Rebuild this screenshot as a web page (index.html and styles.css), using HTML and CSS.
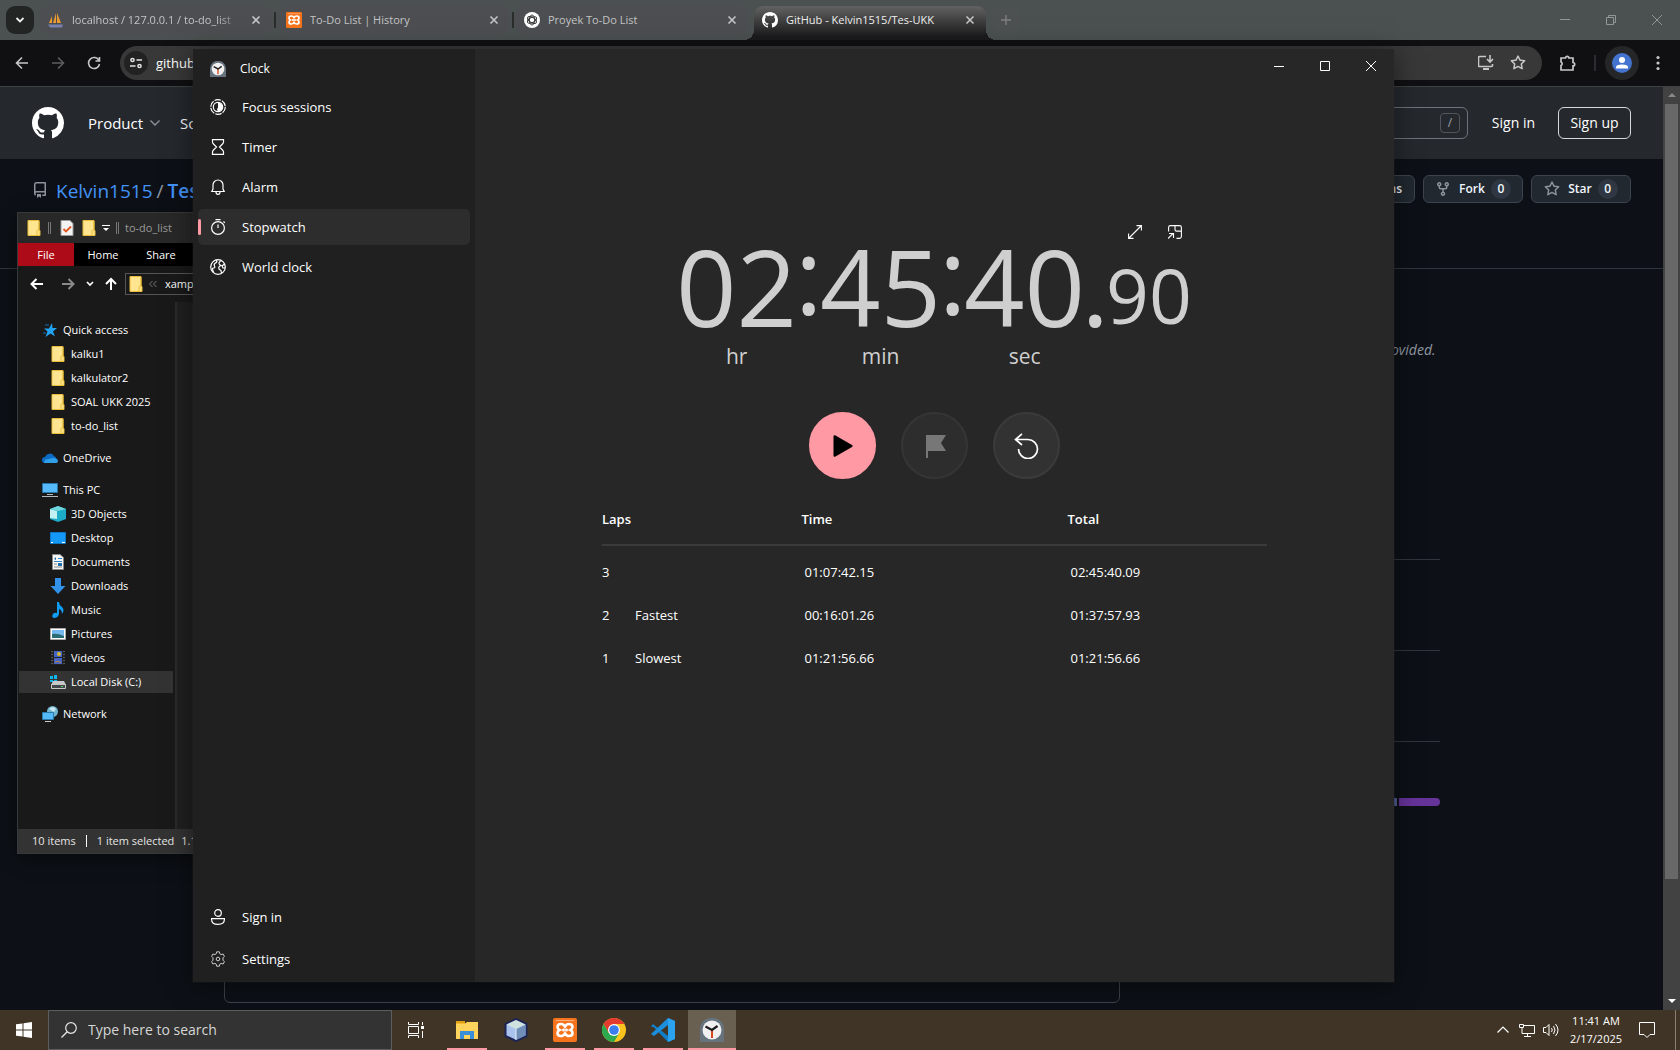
FILE: index.html
```html
<!DOCTYPE html>
<html lang="en">
<head>
<meta charset="utf-8">
<title>Desktop</title>
<link rel="stylesheet" href="styles.css">
</head>
<body>
<svg class="sprite" aria-hidden="true">
  <symbol id="github" viewBox="0 0 16 16"><path fill="#fff" d="M8 0C3.58 0 0 3.58 0 8c0 3.54 2.29 6.53 5.47 7.59.4.07.55-.17.55-.38 0-.19-.01-.82-.01-1.49-2.01.37-2.53-.49-2.69-.94-.09-.23-.48-.94-.82-1.13-.28-.15-.68-.52-.01-.53.63-.01 1.08.58 1.23.82.72 1.21 1.87.87 2.33.66.07-.52.28-.87.51-1.07-1.78-.2-3.64-.89-3.64-3.95 0-.87.31-1.59.82-2.15-.08-.2-.36-1.02.08-2.12 0 0 .67-.21 2.2.82.64-.18 1.32-.27 2-.27.68 0 1.36.09 2 .27 1.53-1.04 2.2-.82 2.2-.82.44 1.1.16 1.92.08 2.12.51.56.82 1.27.82 2.15 0 3.07-1.87 3.75-3.65 3.95.29.25.54.73.54 1.48 0 1.07-.01 1.93-.01 2.2 0 .21.15.46.55.38A8.013 8.013 0 0016 8c0-4.42-3.58-8-8-8z"/></symbol>
  <symbol id="close" viewBox="0 0 10 10"><path d="M1.500 1.500l7 7M8.500 1.500l-7 7" stroke="currentColor" stroke-width="1.600"/></symbol>
  <symbol id="folder" viewBox="0 0 16 16"><path d="M2 .5h11v9.500l1 .5v5H2z" fill="#ffe58f" stroke="#e8bd3a"/><path d="M11 15.500v-4.500q0-1 1-1h1v-9" fill="none" stroke="#e8bd3a"/></symbol>
  <symbol id="star" viewBox="0 0 16 16"><path fill="currentColor" d="M8 .25a.75.75 0 0 1 .673.418l1.882 3.815 4.210.612a.75.75 0 0 1 .416 1.279l-3.046 2.970.719 4.192a.751.751 0 0 1-1.088.791L8 12.347l-3.766 1.980a.75.75 0 0 1-1.088-.790l.720-4.194L.818 6.374a.75.75 0 0 1 .416-1.280l4.210-.611L7.327.668A.75.75 0 0 1 8 .25Zm0 2.445L6.615 5.500a.75.75 0 0 1-.564.410l-3.097.450 2.240 2.184a.75.75 0 0 1 .216.664l-.528 3.084 2.769-1.456a.75.75 0 0 1 .698 0l2.770 1.456-.530-3.084a.75.75 0 0 1 .216-.664l2.240-2.183-3.096-.450a.75.75 0 0 1-.564-.410L8 2.694Z"/></symbol>
  <symbol id="xampp" viewBox="0 0 24 24"><rect width="24" height="24" rx="2" fill="#f5731d"/><path d="M3 2.500h18" stroke="#fbb07c" stroke-width="1"/><path d="M12 8.500Q10.500 6 8 6 4.500 6 4.500 9q0 2 2 3-2 1-2 3 0 3 3.500 3 2.500 0 4-2.500 1.500 2.500 4 2.500 3.500 0 3.500-3 0-2-2-3 2-1 2-3 0-3-3.500-3-2.500 0-4 2.500z" fill="none" stroke="#fff" stroke-width="2.600"/><path d="M9 12h6M10.500 10.500v3M13.500 10.500v3" stroke="#fff" stroke-width="1.600"/></symbol>
  <symbol id="clockface" viewBox="0 0 24 24"><path d="M0 24V11A11 11 0 0 1 12 0a11 11 0 0 1 12 11v13z" fill="#66737f"/><circle cx="12" cy="12" r="9.500" fill="#f0f0f0"/><path d="M12 12v8" stroke="#d8471e" stroke-width="2"/><path d="M5.500 8.500L12 12l5.500-4" fill="none" stroke="#1c1c1c" stroke-width="2.200"/></symbol>
</svg>

<main class="desktop">
  <section class="browser" aria-label="Browser">
    <div class="tabstrip">
      <button class="tab-search" aria-label="Search tabs"><svg width="10" height="10" viewBox="0 0 10 10"><path d="M1.500 3l3.500 3.500L8.500 3" fill="none" stroke="#eee" stroke-width="1.800"/></svg></button>
      <div class="tab"><svg width="16" height="16" viewBox="0 0 16 16"><path d="M1 11l3-7v7zM5 11L8 1v10zM9 11V1l4 10z" fill="#ee9a33"/><path d="M0 12.500h15l-1 3H2z" fill="#7880b0"/></svg><span class="tab-title faded">localhost / 127.0.0.1 / to-do_list</span><button class="tab-close" aria-label="Close tab"><svg width="10" height="10"><use href="#close"/></svg></button></div>
      <div class="tab"><svg width="16" height="16"><use href="#xampp"/></svg><span class="tab-title">To-Do List | History</span><button class="tab-close" aria-label="Close tab"><svg width="10" height="10"><use href="#close"/></svg></button></div>
      <div class="tab"><svg width="16" height="16" viewBox="0 0 16 16"><circle cx="8" cy="8" r="8" fill="#fff"/><g fill="none" stroke="#333" stroke-width=".9"><ellipse cx="8" cy="8" rx="2.600" ry="5"/><ellipse cx="8" cy="8" rx="2.600" ry="5" transform="rotate(60 8 8)"/><ellipse cx="8" cy="8" rx="2.600" ry="5" transform="rotate(120 8 8)"/></g></svg><span class="tab-title">Proyek To-Do List</span><button class="tab-close" aria-label="Close tab"><svg width="10" height="10"><use href="#close"/></svg></button></div>
      <div class="tab active"><svg width="16" height="16"><use href="#github"/></svg><span class="tab-title">GitHub - Kelvin1515/Tes-UKK</span><button class="tab-close" aria-label="Close tab"><svg width="10" height="10"><use href="#close"/></svg></button></div>
      <button class="new-tab" aria-label="New tab"><svg width="10" height="10" viewBox="0 0 10 10"><path d="M5 0v10M0 5h10" stroke="#7d7f80" stroke-width="1.400"/></svg></button>
      <div class="window-buttons dim">
        <button aria-label="Minimize"><svg width="10" height="10" viewBox="0 0 10 10"><path d="M0 4.500h10" stroke="currentColor"/></svg></button>
        <button aria-label="Restore"><svg width="10" height="10" viewBox="0 0 10 10"><path d="M.5 2.500h7v7h-7zM2.500 2.500v-2h7v7h-2" fill="none" stroke="currentColor"/></svg></button>
        <button aria-label="Close"><svg width="10" height="10" viewBox="0 0 10 10"><path d="M0 0l10 10M10 0L0 10" stroke="currentColor"/></svg></button>
      </div>
    </div>

    <div class="toolbar">
      <button class="tool" aria-label="Back"><svg width="14" height="14" viewBox="0 0 14 14"><path d="M13 7H2M7 1.500L1.500 7 7 12.500" fill="none" stroke="#c7c7c7" stroke-width="1.600"/></svg></button>
      <button class="tool" aria-label="Forward"><svg width="14" height="14" viewBox="0 0 14 14"><path d="M1 7h11M7 1.500L12.500 7 7 12.500" fill="none" stroke="#5e5e5e" stroke-width="1.600"/></svg></button>
      <button class="tool" aria-label="Reload"><svg width="14" height="14" viewBox="0 0 14 14"><path d="M12 4.500A5.500 5.500 0 1 0 12.500 8M12.500 1v4h-4" fill="none" stroke="#c7c7c7" stroke-width="1.600"/></svg></button>
      <div class="omnibox">
        <button class="site-info" aria-label="Site information"><svg width="12" height="12" viewBox="0 0 12 12"><g fill="none" stroke="#e3e3e3" stroke-width="1.500"><circle cx="2.500" cy="3" r="1.600"/><path d="M6.500 3H12M0 9h5.500"/><circle cx="9.500" cy="9" r="1.600"/></g></svg></button>
        <input class="url" aria-label="Address" value="github.com/Kelvin1515/Tes-UKK">
        <svg width="16" height="16" viewBox="0 0 16 16"><path d="M8 1.500H1.500q-1 0-1 1v8q0 1 1 1h12q1 0 1-1V9M12 0v6.500M9 4l3 3 3-3" fill="none" stroke="#c7c7c7" stroke-width="1.600"/><path d="M5 13h6v2H5z" fill="#c7c7c7"/></svg>
        <svg class="soft" width="16" height="16"><use href="#star"/></svg>
      </div>
      <svg width="18" height="18" viewBox="0 0 18 18"><path d="M2 4h4.500a1.700 1.700 0 1 1 3.400 0H14v4.500a1.700 1.700 0 1 1 0 3.400V16H2v-4.500a1.900 1.900 0 0 0 0-3.500z" fill="none" stroke="#c7c7c7" stroke-width="1.700"/></svg>
      <span class="toolbar-rule"></span>
      <button class="avatar" aria-label="Profile"><svg width="20" height="20" viewBox="0 0 20 20"><circle cx="10" cy="10" r="10" fill="#4373cf"/><circle cx="10" cy="7" r="3" fill="#fff"/><path d="M4 15.500v-1.500q0-2.500 6-2.500t6 2.500v1.500z" fill="#fff"/></svg></button>
      <svg width="4" height="16" viewBox="0 0 4 16"><g fill="#c7c7c7"><circle cx="2" cy="2.500" r="1.600"/><circle cx="2" cy="8" r="1.600"/><circle cx="2" cy="13.500" r="1.600"/></g></svg>
    </div>

    <div class="viewport">
      <div class="page">
        <header class="gh-header">
          <a href="#" aria-label="GitHub"><svg width="32" height="32"><use href="#github"/></svg></a>
          <nav class="gh-nav"><button>Product <svg width="10" height="10" viewBox="0 0 10 10"><path d="M.5 2.500L5 7l4.500-4.500" fill="none" stroke="#8b929b" stroke-width="1.400"/></svg></button><button>Solutions</button></nav>
          <div class="gh-search"><kbd>/</kbd></div>
          <a class="gh-signin" href="#">Sign in</a>
          <a class="gh-signup" href="#">Sign up</a>
        </header>
        <div class="repo-head">
          <svg width="16" height="16" viewBox="0 0 16 16"><path fill="#8b929b" d="M2 2.500A2.500 2.500 0 0 1 4.500 0h8.750a.75.75 0 0 1 .75.75v12.500a.75.75 0 0 1-.75.75h-2.500a.75.75 0 0 1 0-1.500h1.750v-2h-8a1 1 0 0 0-.714 1.700.75.75 0 1 1-1.072 1.050A2.495 2.495 0 0 1 2 11.500Zm10.500-1h-8a1 1 0 0 0-1 1v6.708A2.486 2.486 0 0 1 4.500 9h8ZM5 12.250a.25.25 0 0 1 .25-.25h3.500a.25.25 0 0 1 .25.25v3.250a.25.25 0 0 1-.4.200l-1.450-1.087a.249.249 0 0 0-.3 0L5.400 15.700a.25.25 0 0 1-.4-.200Z"/></svg>
          <div class="repo-name"><a href="#">Kelvin1515</a><span>/</span><a class="strong" href="#">Tes-UKK</a></div>
          <div class="repo-actions">
            <button>Notifications</button>
            <button class="counted"><svg width="16" height="16" viewBox="0 0 16 16"><path fill="#8b929b" d="M5 5.372v.878c0 .414.336.75.75.75h4.500a.75.75 0 0 0 .75-.75v-.878a2.250 2.250 0 1 1 1.500 0v.878a2.250 2.250 0 0 1-2.250 2.250h-1.500v2.128a2.251 2.251 0 1 1-1.500 0V8.500h-1.500A2.250 2.250 0 0 1 3.500 6.250v-.878a2.250 2.250 0 1 1 1.500 0ZM5 3.250a.75.75 0 1 0-1.500 0 .75.75 0 0 0 1.500 0Zm6.750.75a.75.75 0 1 0 0-1.500.75.75 0 0 0 0 1.500Zm-3 8.750a.75.75 0 1 0-1.500 0 .75.75 0 0 0 1.500 0Z"/></svg>Fork<span class="count">0</span></button>
            <button class="counted"><svg class="muted" width="16" height="16"><use href="#star"/></svg>Star<span class="count">0</span></button>
          </div>
        </div>
        <div class="repo-body">
          <div class="files"></div>
          <aside class="about">
            <p>No description, website, or topics provided.</p>
            <section></section>
            <section></section>
            <div class="languages"><span class="lang-blue"></span><span class="lang-purple"></span></div>
          </aside>
        </div>
      </div>
      <div class="scrollbar"><span class="arrow up"></span><span class="thumb"></span><span class="arrow down"></span></div>
    </div>
  </section>

  <section class="explorer" aria-label="File Explorer">
    <div class="ex-title">
      <svg width="16" height="16"><use href="#folder"/></svg><span class="grip"></span>
      <svg class="props" width="14" height="16" viewBox="0 0 14 16"><path d="M1 .5h9l3 3v12H1z" fill="#f4f4f4" stroke="#9a9a9a"/><path d="M3.500 9l2.500 2.500 5-5" fill="none" stroke="#e2561f" stroke-width="1.800"/></svg>
      <svg width="16" height="16"><use href="#folder"/></svg>
      <svg width="8" height="8" viewBox="0 0 8 8"><path d="M0 1.500h8" stroke="#fff"/><path d="M1 4h6L4 7z" fill="#fff"/></svg><span class="grip"></span>
      <span class="ex-name">to-do_list</span>
    </div>
    <nav class="ribbon"><button class="file">File</button><button>Home</button><button>Share</button></nav>
    <div class="ex-nav">
      <svg width="14" height="14" viewBox="0 0 14 14"><path d="M13 7H2M6.500 2L1.500 7l5 5" fill="none" stroke="#fff" stroke-width="2"/></svg>
      <svg width="14" height="14" viewBox="0 0 14 14"><path d="M1 7h11M7.500 2l5 5-5 5" fill="none" stroke="#8a8a8a" stroke-width="2"/></svg>
      <svg width="8" height="8" viewBox="0 0 8 8"><path d="M1 2l3 3 3-3" fill="none" stroke="#fff" stroke-width="1.700"/></svg>
      <svg width="12" height="14" viewBox="0 0 12 14"><path d="M6 13V2M1 7l5-5 5 5" fill="none" stroke="#fff" stroke-width="2"/></svg>
      <div class="ex-path"><svg width="16" height="16"><use href="#folder"/></svg><svg width="8" height="8" viewBox="0 0 8 8"><path d="M3.500 1l-3 3 3 3M7.500 1l-3 3 3 3" fill="none" stroke="#777"/></svg>xampp</div>
    </div>
    <div class="ex-body">
      <ul class="tree">
        <li class="root"><svg width="16" height="16" viewBox="0 0 16 16"><path d="M10 1l.5 5H15l-4 3.500 2 5-4.500-3-5 3.500 2-5.500L2 6.500h5z" fill="#22a2f2"/><path d="M3 3h4M1 11h3" stroke="#1270b8"/></svg>Quick access</li>
        <li><svg width="16" height="16"><use href="#folder"/></svg>kalku1</li>
        <li><svg width="16" height="16"><use href="#folder"/></svg>kalkulator2</li>
        <li><svg width="16" height="16"><use href="#folder"/></svg>SOAL UKK 2025</li>
        <li class="last"><svg width="16" height="16"><use href="#folder"/></svg>to-do_list</li>
        <li class="root last"><svg width="16" height="16" viewBox="0 0 16 16"><path d="M3 13a3 3 0 0 1 0-6 5 5 0 0 1 9-1 4 4 0 0 1 1 7z" fill="#0c6bc2"/><path d="M2 13q0-4 5-4l3-1q6 0 6 3 0 2-3 2z" fill="#2f9fea"/></svg>OneDrive</li>
        <li class="root"><svg width="16" height="16" viewBox="0 0 16 16"><path d="M.5 1.500h15v9H.5z" fill="#55b9fb" stroke="#2677a8"/><path d="M5 12.500h6M0 14.500h16" stroke="#aebac2"/></svg>This PC</li>
        <li><svg width="16" height="16" viewBox="0 0 16 16"><path d="M0 3l8-3 8 3v10l-8 3-8-3z" fill="#1cacc8"/><path d="M0 3l7 2v8l-7-1z" fill="#c3f1f1"/><path d="M0 3l8-3 8 3-8 2z" fill="#72d6dd"/></svg>3D Objects</li>
        <li><svg width="16" height="16" viewBox="0 0 16 16"><path d="M.5 2.500h15v11H.5z" fill="#1499f8" stroke="#0c78c8"/><path d="M1 12.500h2m9 0h3" stroke="#fff"/></svg>Desktop</li>
        <li><svg width="16" height="16" viewBox="0 0 16 16"><path d="M2.500.5H10l3.500 3v12h-11z" fill="#f7f7f7" stroke="#888"/><path d="M8 4.500h4M4 7.500h8" stroke="#2d8ad0"/><path d="M4 10h3M4 13h8" stroke="#888"/><path d="M4 5l2-2v3zM8 9h4v3H8z" fill="#236ea8"/></svg>Documents</li>
        <li><svg width="16" height="16" viewBox="0 0 16 16"><path d="M5 0h6v8h4.500L8 16 .5 8H5z" fill="#3291e8"/></svg>Downloads</li>
        <li><svg width="16" height="16" viewBox="0 0 16 16"><path d="M7 0h2q0 3 3 5 3 3 0 7 0-4-3-5v5q-1 4-5 4-3-1-1-4 1-2 4-1z" fill="#109bf5"/></svg>Music</li>
        <li><svg width="16" height="16" viewBox="0 0 16 16"><path d="M.5 2.500h15v11H.5z" fill="#fff" stroke="#aaa"/><path d="M2 4h12v8H2z" fill="#76b7ee"/><path d="M2 8q5-1 12 2v2H2z" fill="#2b6b73"/></svg>Pictures</li>
        <li><svg width="16" height="16" viewBox="0 0 16 16"><path d="M1 1h14v14H1z" fill="#222"/><path d="M2 1v14M14 1v14" stroke="#888" stroke-dasharray="1 2"/><path d="M4 1h8v6H4zM4 8h8v6H4z" fill="#4465c8"/><circle cx="9" cy="4" r="2" fill="#d6b82c"/><path d="M5 12q3-2 6 1" stroke="#c67b35" fill="none"/></svg>Videos</li>
        <li class="last selected"><svg width="16" height="16" viewBox="0 0 16 16"><path d="M0 2h3v3H0zM4 1h3v4H4zM0 6h3v2H0zM4 6h3v2H4z" fill="#10b6ee"/><path d="M3 7h11l2 4H1z" fill="#c8c8c8"/><path d="M1.500 10.500h14v4h-14z" fill="#45484b" stroke="#c8c8c8"/><path d="M11 12.500h2" stroke="#5fd35f"/></svg>Local Disk (C:)</li>
        <li class="root"><svg width="16" height="16" viewBox="0 0 16 16"><circle cx="10.500" cy="5.500" r="5.500" fill="#71b4cf"/><path d="M7 3q4-4 7 0l-2 3z" fill="#c6e6f0"/><path d="M.5 6.500h11v7H.5z" fill="#54bafa" stroke="#2b7aaa"/><path d="M3 15.500h6" stroke="#ccc"/></svg>Network</li>
      </ul>
      <div class="ex-content"></div>
    </div>
    <div class="ex-status"><span>10 items</span><span class="bar"></span><span>1 item selected</span><span>1.17 KB</span></div>
  </section>

  <section class="clock" aria-label="Clock">
    <div class="clock-side">
      <h1><svg width="16" height="16"><use href="#clockface"/></svg>Clock</h1>
      <nav class="clock-nav">
        <button><svg width="16" height="16" viewBox="0 0 16 16"><circle cx="8" cy="8" r="7.300" fill="none" stroke="#fff" stroke-width="1.200" stroke-dasharray="6.500 1.150"/><circle cx="8" cy="8" r="4.700" fill="none" stroke="#fff" stroke-width="1.200"/><path d="M8 3.500a4.500 4.500 0 0 1 0 9l-1-2 1-2z" fill="#fff"/></svg>Focus sessions</button>
        <button><svg width="16" height="16" viewBox="0 0 16 16"><path d="M2.500.6h11v2.400q0 1-1 2L9.500 8l3 3q1 1 1 2v2.400h-11V13q0-1 1-2l3-3-3-3q-1-1-1-2z" fill="none" stroke="#fff" stroke-width="1.200"/></svg>Timer</button>
        <button><svg width="16" height="16" viewBox="0 0 16 16"><path d="M1.800 12.500L3 10V6a5 5 0 0 1 10 0v4l1.200 2.500zM6 13q0 2.300 2 2.300t2-2.300" fill="none" stroke="#fff" stroke-width="1.200"/></svg>Alarm</button>
        <button class="current"><svg width="16" height="16" viewBox="0 0 16 16"><circle cx="8" cy="9" r="6.400" fill="none" stroke="#fff" stroke-width="1.200"/><path d="M8 5.500V9M5.500.6h5M13.500 2.500l1.300 1.300" stroke="#fff" stroke-width="1.200"/></svg>Stopwatch</button>
        <button><svg width="16" height="16" viewBox="0 0 16 16"><g fill="none" stroke="#fff" stroke-width="1.200"><circle cx="8" cy="8" r="7.300"/><path d="M6.500 1q1 2-1 3t-1 3-1 2 0 4M11 1.500q-3 2-1.500 4l1.500 1q-3 1-2 3.500l2 1.500.5 3M14.500 5l-2.500 2 1 2h2"/></g></svg>World clock</button>
      </nav>
      <div class="clock-foot">
        <button><svg width="16" height="16" viewBox="0 0 16 16"><circle cx="8" cy="4" r="3.300" fill="none" stroke="#fff" stroke-width="1.200"/><path d="M1.600 9.600h12.800v1q0 4.800-6.400 4.800t-6.400-4.800z" fill="none" stroke="#fff" stroke-width="1.200"/></svg>Sign in</button>
        <button><svg width="16" height="16" viewBox="0 0 16 16"><path d="M6.700.8h2.600l.5 2 1.300.8 2-.6 1.300 2.300L13 6.800v2.400l1.400 1.500L13.100 13l-2-.6-1.300.8-.5 2H6.700l-.5-2-1.300-.8-2 .6-1.300-2.300L3 9.200V6.800L1.600 5.300 2.900 3l2 .6 1.300-.8z" fill="none" stroke="#ccc"/><circle cx="8" cy="8" r="1.800" fill="none" stroke="#ccc"/></svg>Settings</button>
      </div>
    </div>
    <div class="clock-main">
      <div class="window-buttons">
        <button aria-label="Minimize"><svg width="10" height="10" viewBox="0 0 10 10"><path d="M0 5.500h10" stroke="currentColor"/></svg></button>
        <button aria-label="Maximize"><svg width="10" height="10" viewBox="0 0 10 10"><path d="M.5.5h9v9h-9z" fill="none" stroke="currentColor"/></svg></button>
        <button aria-label="Close"><svg width="10" height="10" viewBox="0 0 10 10"><path d="M0 0l10 10M10 0L0 10" stroke="currentColor"/></svg></button>
      </div>
      <div class="stopwatch">
        <div class="view-buttons">
          <button aria-label="Expand"><svg width="14" height="14" viewBox="0 0 14 14"><path d="M.6 8.500v4.900h4.900M8.500.6h4.900v4.900M13 1L1 13" fill="none" stroke="#fff" stroke-width="1.100"/></svg></button>
          <button aria-label="Keep on top"><svg width="14" height="14" viewBox="0 0 14 14"><path d="M.6 6.500V2.500q0-1.900 1.900-1.900h9q1.900 0 1.900 1.900v9q0 1.900-1.900 1.900h-3M7 .6v4q0 1.500 1.500 1.500h5M0 13.500l5-5M1 8.500h4.500V13" fill="none" stroke="#fff" stroke-width="1.100"/></svg></button>
        </div>
        <div class="time" role="timer">
          <div class="unit">02<small>hr</small></div><span class="colon">:</span>
          <div class="unit">45<small>min</small></div><span class="colon">:</span>
          <div class="unit">40<small>sec</small></div><span class="dot">.</span>
          <span class="hundredths">90</span>
        </div>
        <div class="controls">
          <button class="play" aria-label="Start"><svg width="24" height="24" viewBox="0 0 24 24"><path d="M2.500 2.500q0-2 2-1L21 11q1.500 1 0 2L4.500 22.500q-2 1-2-1z"/></svg></button>
          <button aria-label="Lap" disabled><svg width="24" height="24" viewBox="0 0 24 24"><path d="M3 1h20l-5 8 5 8H5v8H3z" fill="#777"/></svg></button>
          <button aria-label="Reset"><svg width="26" height="26" viewBox="0 0 26 26"><path d="M8 .8L1.500 6.500 8 12M2 6.500h12a9.500 9.500 0 1 1-9.500 9.500" fill="none" stroke="#fff" stroke-width="1.700"/></svg></button>
        </div>
        <table class="laps">
          <thead><tr><th>Laps</th><th>Time</th><th>Total</th></tr></thead>
          <tbody>
            <tr><td><span class="lap-no">3</span></td><td>01:07:42.15</td><td>02:45:40.09</td></tr>
            <tr><td><span class="lap-no">2</span>Fastest</td><td>00:16:01.26</td><td>01:37:57.93</td></tr>
            <tr><td><span class="lap-no">1</span>Slowest</td><td>01:21:56.66</td><td>01:21:56.66</td></tr>
          </tbody>
        </table>
      </div>
    </div>
  </section>
</main>

<footer class="taskbar">
  <button class="start" aria-label="Start"><svg width="16" height="16" viewBox="0 0 16 16"><path d="M0 2.300l6.500-.9v6.100H0zM7.500 1.200L16 0v7.500H7.500zM0 8.500h6.500v6.100L0 13.700zM7.500 8.500H16V16l-8.500-1.200z" fill="#fff"/></svg></button>
  <label class="search"><svg width="16" height="16" viewBox="0 0 16 16"><circle cx="10" cy="6" r="5.300" fill="none" stroke="#e6e6e6" stroke-width="1.200"/><path d="M6.200 9.800L.5 15.500" stroke="#e6e6e6" stroke-width="1.300"/></svg><input type="text" placeholder="Type here to search" aria-label="Search"></label>
  <div class="apps">
    <button aria-label="Task View"><svg width="16" height="16" viewBox="0 0 16 16"><path d="M.5 0v2.500h10V0M.5 16v-2.500h10V16M.5 4.500h10v7H.5zM14.500 0v3M14.500 9v7" fill="none" stroke="#fff"/><path d="M13 4h3v3h-3z" fill="#fff"/></svg></button>
    <button class="open" aria-label="File Explorer"><svg width="24" height="24" viewBox="0 0 24 24"><path d="M1 3h9v4H1z" fill="#e3a012"/><path d="M1 5.500h9L12 4h11v17H1z" fill="#ffd35c"/><path d="M5 21v-8h14v8h-4v-4H9v4z" fill="#3b8fd9"/></svg></button>
    <button aria-label="NetBeans"><svg width="24" height="24" viewBox="0 0 24 24"><path d="M12 1l10.500 5v12L12 23 1.500 18V6z" fill="#a9c3ec" stroke="#1c2456" stroke-width="2"/><path d="M12 11l9.500-4.500v11L12 22z" fill="#6f8eb8"/><path d="M2.500 6.500L12 2l9.500 4.500L12 11z" fill="#cfe2df"/><path d="M12 11v11" stroke="#e5eefb"/></svg></button>
    <button class="open" aria-label="XAMPP"><svg width="24" height="24"><use href="#xampp"/></svg></button>
    <button class="open" aria-label="Chrome"><svg width="24" height="24" viewBox="0 0 24 24"><circle cx="12" cy="12" r="12" fill="#fcc31e"/><path d="M1.600 6A12 12 0 0 1 22.400 6H12l-5.200 9z" fill="#e33b2e"/><path d="M1.600 6A12 12 0 0 0 12 24l5.200-9H6.800z" fill="#2da94f"/><circle cx="12" cy="12" r="6" fill="#fff"/><circle cx="12" cy="12" r="4.800" fill="#3b7ded"/></svg></button>
    <button class="open" aria-label="Visual Studio Code"><svg width="24" height="24" viewBox="0 0 24 24"><path d="M17 0l7 3v18l-7 3L3 9.500l-3-1L2 6l15 12z" fill="#0f7fc9"/><path d="M0 16l17-16v7L3 18z" fill="#1b8fdc"/><path d="M17 0l7 3v18l-7 3z" fill="#2ba3ef"/></svg></button>
    <button class="open focused" aria-label="Clock"><svg width="24" height="24"><use href="#clockface"/></svg></button>
  </div>
  <div class="tray">
    <svg width="12" height="8" viewBox="0 0 12 8"><path d="M.5 6.500L6 1l5.500 5.500" fill="none" stroke="#fff" stroke-width="1.200"/></svg>
    <svg width="16" height="16" viewBox="0 0 16 16"><path d="M5 3.500h10.500v8H3V6M8.500 11.500v3M5 14.500h7M.5 2.500h4v3h-4z" fill="none" stroke="#fff"/></svg>
    <svg width="16" height="16" viewBox="0 0 16 16"><path d="M.5 5.500H3l3-3v11l-3-3H.5zM8.500 6q1.500 2 0 4M10.500 4q3 4 0 8M12.500 2q5 6 0 12" fill="none" stroke="#fff"/></svg>
    <div class="datetime"><span>11:41 AM</span><span>2/17/2025</span></div>
    <button class="notice" aria-label="Notifications"><svg width="16" height="16" viewBox="0 0 16 16"><path d="M.5.5h15v12h-4.500L8 15.500 5 12.500H.5z" fill="none" stroke="#fff"/></svg></button>
    <span class="peek"></span>
  </div>
</footer>
</body>
</html>
```
FILE: styles.css
```css
* { box-sizing: border-box; }
html, body { height: 100%; }
body {
  margin: 0;
  display: flex;
  flex-direction: column;
  overflow: hidden;
  background: #0d1117;
  color: #fff;
  font: 13px/18px "Open Sans", "Noto Sans", sans-serif;
}
button, input { font: inherit; color: inherit; background: none; border: 0; padding: 0; margin: 0; }
a { color: inherit; text-decoration: none; }
svg { flex: none; display: block; }
.sprite { position: absolute; width: 0; height: 0; }

.desktop { position: relative; flex: 1; min-height: 0; overflow: hidden; }

/* Browser */
.browser { display: flex; flex-direction: column; height: 100%; }
.tabstrip { display: flex; align-items: flex-start; height: 40px; padding: 6px 0 0 6px; background: #4b5150; font-size: 12px; }
.tab-search { width: 28px; height: 28px; margin-right: 6px; border-radius: 9px; background: #232424; display: grid; place-items: center; }
.tab { position: relative; display: flex; align-items: center; gap: 8px; width: 232px; height: 28px; margin-right: 6px; padding: 0 11px 0 8px; border-radius: 9px; background: #4d4e51; color: #c2c4c5; }
.tab:not(.active):not(:nth-child(4))::after { content: ""; position: absolute; right: -4px; top: 6px; width: 2px; height: 16px; background: #2b2d2d; }
.tab-title { flex: 1; overflow: hidden; white-space: nowrap; font-size: 11px; }
.faded { -webkit-mask-image: linear-gradient(90deg, #000 85%, transparent); mask-image: linear-gradient(90deg, #000 85%, transparent); }
.tab-close { color: #c4c5c6; }
.tab.active { height: 34px; padding-bottom: 6px; border-radius: 9px 9px 0 0; background: linear-gradient(#626262, #1b1b1d 90%); color: #eee; }
.tab.active::before, .tab.active::after { content: ""; position: absolute; bottom: 0; width: 10px; height: 10px; }
.tab.active::before { left: -10px; background: radial-gradient(circle at 0 0, transparent 10px, #1b1b1d 10px); }
.tab.active::after { right: -10px; background: radial-gradient(circle at 100% 0, transparent 10px, #1b1b1d 10px); }
.new-tab { width: 28px; height: 28px; border-radius: 9px; background: #4d5152; display: grid; place-items: center; }
.window-buttons { display: flex; margin-left: auto; color: #fff; }
.window-buttons button { width: 46px; height: 28px; display: grid; place-items: center; }
.window-buttons.dim { color: #939696; }

.toolbar { display: flex; align-items: center; height: 47px; padding: 0 20px 0 4px; background: #101012; border-bottom: 1px solid #3f4143; }
.tool { width: 36px; height: 34px; display: grid; place-items: center; }
.omnibox { flex: 1; display: flex; align-items: center; gap: 16px; height: 34px; margin: 0 17px 0 8px; padding: 0 16px 0 4px; border-radius: 17px; background: #383838; }
.site-info { width: 24px; height: 24px; margin-right: -8px; border-radius: 50%; background: #222; display: grid; place-items: center; }
.url { flex: 1; min-width: 0; font-size: 13px; color: #fff; }
.soft { color: #c7c7c7; }
.toolbar-rule { width: 2px; height: 16px; margin: 0 9px 0 17px; background: #2b2c31; }
.avatar { width: 34px; height: 34px; margin-right: 17px; border-radius: 50%; background: #252627; display: grid; place-items: center; }

.viewport { flex: 1; min-height: 0; display: flex; }
.page { flex: 1; min-width: 0; display: flex; flex-direction: column; background: #0d1117; }
.gh-header { display: flex; align-items: center; height: 72px; padding: 0 32px; background: #25292e; font-size: 15px; }
.gh-nav { display: flex; gap: 20px; margin-left: 24px; }
.gh-nav button { display: flex; align-items: center; gap: 7px; }
.gh-search { display: flex; align-items: center; justify-content: flex-end; width: 320px; height: 32px; margin-left: auto; padding-right: 7px; border: 1px solid #6c737c; border-radius: 6px; }
kbd { width: 20px; height: 20px; border: 1px solid #50565d; border-radius: 4px; color: #9aa1a9; font: 12px/18px "Open Sans", sans-serif; text-align: center; }
.gh-signin, .gh-signup { font-size: 14px; }
.gh-signin { margin: 0 23px 0 24px; }
.gh-signup { width: 73px; height: 32px; border: 1px solid #d5d8dc; border-radius: 6px; line-height: 30px; text-align: center; }
.repo-head { display: flex; align-items: flex-start; gap: 8px; height: 110px; padding: 16px 32px; border-bottom: 1px solid #30363d; }
.repo-head > svg { margin-top: 7px; }
.repo-name { display: flex; gap: 4px; font-size: 19px; line-height: 32px; color: #4493f8; }
.repo-name span { color: #9198a1; }
.strong { font-weight: 600; }
.repo-actions { display: flex; gap: 8px; margin-left: auto; font-size: 12px; font-weight: 600; color: #f0f6fc; }
.repo-actions button { display: flex; align-items: center; justify-content: center; height: 28px; padding: 0 12px; border: 1px solid #3d444d; border-radius: 6px; background: #212830; }
.repo-actions .counted { width: 100px; padding: 0; }
.counted svg { margin-right: 8px; }
.muted { color: #8b929b; }
.count { width: 20px; height: 20px; margin-left: 6px; border-radius: 10px; background: #2f3742; line-height: 20px; text-align: center; }
.repo-body { flex: 1; min-height: 0; display: flex; gap: 24px; width: 100%; max-width: 1280px; margin: 0 auto; padding: 24px 32px 7px; }
.files { flex: 1; border: 1px solid #3d444d; border-radius: 6px; }
.about { width: 296px; padding-top: 45px; }
.about p { height: 222px; margin: 0; border-bottom: 1px solid #30363d; color: #9198a1; font-size: 14px; line-height: 24px; font-style: italic; white-space: nowrap; direction: rtl; unicode-bidi: plaintext; text-align: right; padding-right: 4px; }
.about section { height: 91px; border-bottom: 1px solid #30363d; }
.languages { display: flex; gap: 2px; height: 8px; margin-top: 56px; overflow: hidden; border-radius: 4px; }
.lang-blue { flex: 1; background: #4f5d95; }
.lang-purple { width: 41px; background: #663399; }
.scrollbar { width: 17px; display: flex; flex-direction: column; align-items: center; background: #424242; }
.arrow { height: 17px; padding-top: 6px; }
.arrow::before { content: ""; display: block; border: 4px solid transparent; }
.up::before { border-top: 0; border-bottom-color: #888; }
.down::before { border-bottom: 0; border-top-color: #fff; }
.thumb { width: 13px; height: 84%; margin-bottom: auto; background: #686868; }

/* File Explorer */
.explorer { position: absolute; left: 17px; top: 212px; width: 720px; height: 642px; display: flex; flex-direction: column; border: 1px solid #38393b; background: #191919; box-shadow: 0 4px 16px rgba(0, 0, 0, .5); font-size: 11px; }
.ex-title { display: flex; align-items: center; gap: 5px; height: 30px; padding-left: 8px; background: #282828; color: #999; }
.grip { width: 3px; height: 12px; margin: 0 1px; border: 1px solid #777; border-width: 0 1px; }
.ex-title .props { margin: 0 2px 0 3px; }
.ribbon { display: flex; height: 23px; background: #000; }
.ribbon button { width: 58px; }
.ribbon .file { width: 56px; background: #ad0b17; }
.ex-nav { display: flex; align-items: center; gap: 11px; height: 36px; padding-left: 12px; }
.ex-nav > svg:first-child { margin-right: 6px; }
.ex-nav > svg:nth-child(4) { margin-right: -3px; }
.ex-path { flex: 1; display: flex; align-items: center; gap: 5px; height: 22px; padding-left: 2px; border: 1px solid #555; }
.ex-path svg + svg { margin-right: 3px; }
.ex-body { flex: 1; display: flex; }
.tree { width: 159px; margin: 0; padding: 17px 2px 0 1px; list-style: none; border-right: 2px solid #2b2b2b; }
.tree li { display: flex; align-items: center; gap: 5px; height: 22px; margin-bottom: 2px; padding-left: 31px; white-space: nowrap; }
.tree .root { padding-left: 23px; }
.tree .last { margin-bottom: 10px; }
.tree .selected { background: #333; }
.ex-content { flex: 1; background: #202020; }
.ex-status { display: flex; align-items: center; gap: 10px; height: 24px; padding-left: 14px; background: #333; color: #e4e4e4; }
.bar { width: 1px; height: 12px; background: #fff; }
.bar + span { margin-right: -3px; }

/* Clock */
.clock { position: absolute; left: 193px; right: 286px; top: 49px; bottom: 28px; display: flex; background: #272727; box-shadow: 0 4px 24px rgba(0, 0, 0, .5), 0 0 1px #444; }
.clock-side { width: 282px; display: flex; flex-direction: column; padding: 11px 5px 5px; background: #202020; }
.clock-side h1 { display: flex; align-items: center; gap: 14px; height: 18px; margin: 0 0 11px; padding-left: 12px; font-size: 12px; font-weight: 400; }
.clock-side nav, .clock-foot { display: flex; flex-direction: column; gap: 4px; }
.clock-side .clock-foot { gap: 6px; margin-top: auto; }
.clock-side button { position: relative; display: flex; align-items: center; gap: 16px; height: 36px; padding-left: 12px; border-radius: 5px; }
.clock-side .current { background: #2d2d2d; }
.current::before { content: ""; position: absolute; left: 0; top: 10px; width: 3px; height: 16px; border-radius: 2px; background: #ff99a4; }
.clock-main { flex: 1; min-width: 0; display: flex; flex-direction: column; }
.clock-main .window-buttons { padding-top: 3px; }
.stopwatch { width: 100%; max-width: 665px; margin: 0 auto; padding-top: 136px; }
.view-buttons { display: flex; justify-content: flex-end; gap: 8px; padding-right: 76px; }
.view-buttons button { width: 32px; height: 32px; display: grid; place-items: center; }
.time { display: flex; align-items: flex-start; justify-content: center; height: 128px; color: #cfcfcf; font-size: 106px; line-height: 76px; }
.unit { width: 119px; display: flex; flex-direction: column; align-items: center; }
.unit small { margin-top: 16px; font-size: 21px; line-height: 32px; }
.colon, .dot { width: 25px; display: flex; justify-content: center; }
.dot { width: 22px; }
.colon { line-height: 52px; }
.hundredths { font-size: 75px; line-height: 95px; }
.controls { display: flex; justify-content: center; gap: 25px; margin-top: 36px; }
.controls button { width: 67px; height: 67px; border: 2px solid #3b3b3b; border-radius: 50%; background: #323232; display: grid; place-items: center; }
.controls button:disabled { background: #2d2d2d; border-color: #353535; }
.controls .play { background: #ff99a4; border-color: #ff99a4; }
.laps { width: 100%; margin-top: 15px; border-collapse: collapse; table-layout: fixed; }
.laps th { height: 51px; padding: 0; border-bottom: 2px solid #3b3b3b; font-weight: 600; text-align: left; }
.laps th:nth-child(1), .laps th:nth-child(3) { width: 30%; }
.laps td { height: 43px; padding: 0; }
.laps tbody tr:first-child td { height: 48px; padding-top: 4px; }
.laps td + td { padding-left: 3px; }
.lap-no { display: inline-block; width: 33px; }

/* Taskbar */
.taskbar { display: flex; height: 40px; background: #3f3425; }
.start { width: 48px; display: grid; place-items: center; }
.search { width: 344px; display: flex; align-items: center; gap: 11px; padding-left: 12px; background: #333; border: 1px solid #5e5e5e; }
.search input { flex: 1; min-width: 0; font-size: 14px; }
.search input::placeholder { color: #d6d6d6; opacity: 1; }
.apps { display: flex; gap: 1px; }
.apps button { position: relative; width: 48px; display: grid; place-items: center; }
.apps button:first-child { margin-right: 2px; }
.open::after { content: ""; position: absolute; left: 4px; right: 4px; bottom: 0; height: 2px; background: #ff99a4; }
.apps .focused { background: #696051; }
.focused::after { left: 0; right: 0; }
.tray { display: flex; align-items: center; gap: 10px; margin-left: auto; }
.tray svg + svg { margin-right: -2px; }
.datetime { width: 54px; margin-left: 2px; display: flex; flex-direction: column; align-items: center; font-size: 11px; }
.notice { margin: 0 10px 0 6px; }
.peek { width: 5px; height: 40px; border-left: 1px solid #8a7f70; }
```
